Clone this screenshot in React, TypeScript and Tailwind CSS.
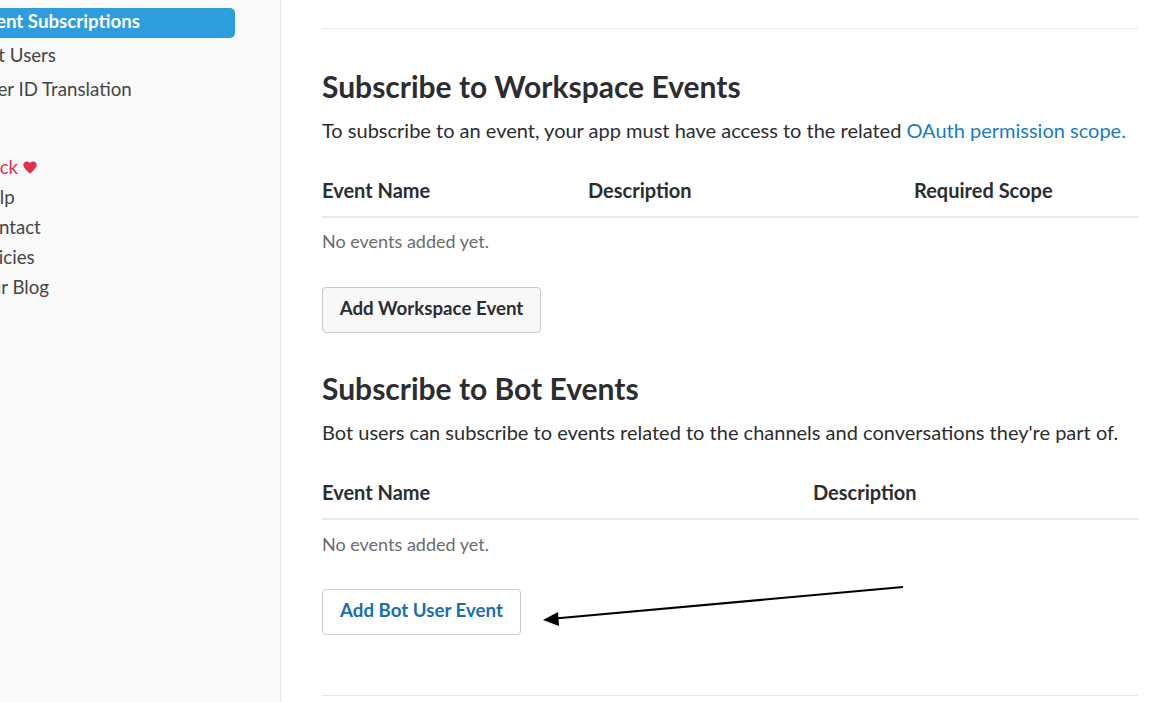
import React from "react";

const font = { fontFamily: "Lato, 'Noto Sans', sans-serif" };

function SideItem({ label, active, red }: { label: React.ReactNode; active?: boolean; red?: boolean }) {
  if (active) {
    return (
      <div className="h-[30px] w-[281px] rounded-[5px] bg-[#2d9de0] pl-[22px] flex items-center text-white font-bold text-[18.7px] leading-[24px]">
        <span className="-mt-[4px]">{label}</span>
      </div>
    );
  }
  return (
    <div className={`h-[30px] pl-[22px] flex items-center text-[18.7px] leading-[24px] ${red ? "text-[#e0304b]" : "text-[#454545]"}`}>
      {label}
    </div>
  );
}

export default function App() {
  return (
    <div className="w-[1160px] h-[702px] overflow-hidden flex bg-white text-[#2c2d30]" style={font}>
      <aside className="w-[281px] shrink-0 bg-[#f9f9f9] border-r border-[#e9e9e9] overflow-hidden">
        <div className="-ml-[46px] pt-[8px] flex flex-col">
          <SideItem label="Event Subscriptions" active />
          <div className="mt-[2px] flex flex-col gap-[4px]">
            <SideItem label="Bot Users" />
            <SideItem label="User ID Translation" />
          </div>
          <div className="mt-[48px] flex flex-col">
            <SideItem
              red
              label={
                <span className="flex items-center gap-[5px]">
                  Slack
                  <svg width="14" height="13" viewBox="0 0 24 22" fill="#e0304b">
                    <path d="M12 21.5 10.3 19.9C4.2 14.4 0.5 11 0.5 6.8 0.5 3.4 3.1 0.8 6.5 0.8c1.9 0 3.8 0.9 5.5 2.4C13.7 1.7 15.6 0.8 17.5 0.8c3.4 0 6 2.6 6 6 0 4.2-3.7 7.6-9.8 13.1L12 21.5z" />
                  </svg>
                </span>
              }
            />
            <SideItem label="Help" />
            <SideItem label="Contact" />
            <SideItem label={<span className="-ml-[3px]">Policies</span>} />
            <SideItem label="Our Blog" />
          </div>
        </div>
      </aside>

      <main className="relative flex-1 pl-[41px] pr-[22px]">
        <div className="h-[29px] border-b border-[#e8e8e8]" />

        <section className="pt-[39px]">
          <h2 className="text-[30px] leading-[36px] font-bold text-[#2c2d30]">Subscribe to Workspace Events</h2>
          <p className="mt-[13px] text-[20px] leading-[27px] text-[#2c2d30]">
            To subscribe to an event, your app must have access to the related{" "}
            <span className="text-[#1a7bbf]">OAuth permission scope.</span>
          </p>
          <div className="mt-[33px] flex border-b-2 border-[#e8e8e8] pb-[12px] text-[20px] leading-[27px] font-bold">
            <div className="w-[266px]">Event Name</div>
            <div className="w-[326px]">Description</div>
            <div>Required Scope</div>
          </div>
          <div className="pt-[11px] text-[18px] leading-[24px] text-[#6b6b6b]">No events added yet.</div>
          <button className="mt-[34px] h-[46px] w-[219px] pb-[3px] rounded-[4px] border border-[#c8c8c8] bg-[#f8f8f8] text-[18.7px] font-bold text-[#2c2d30]">
            Add Workspace Event
          </button>
        </section>

        <section className="pt-[37px]">
          <h2 className="text-[30px] leading-[36px] font-bold text-[#2c2d30]">Subscribe to Bot Events</h2>
          <p className="mt-[13px] text-[20px] leading-[27px] text-[#2c2d30]">
            Bot users can subscribe to events related to the channels and conversations they're part of.
          </p>
          <div className="mt-[33px] flex border-b-2 border-[#e8e8e8] pb-[12px] text-[20px] leading-[27px] font-bold">
            <div className="w-[491px]">Event Name</div>
            <div>Description</div>
          </div>
          <div className="pt-[12px] text-[18px] leading-[24px] text-[#6b6b6b]">No events added yet.</div>
          <button className="mt-[33px] h-[46px] w-[199px] pb-[3px] rounded-[4px] border border-[#c8c8c8] bg-white text-[18.7px] font-bold text-[#1a6fb0]">
            Add Bot User Event
          </button>
        </section>

        <div className="mt-[60px] border-b border-[#e8e8e8]" />

        <svg className="absolute left-[-281px] top-0 pointer-events-none" width="1160" height="702">
          <line x1="903" y1="587" x2="555" y2="618.5" stroke="#000" strokeWidth="2.2" />
          <polygon points="543,620 558,612 559,626" fill="#000" />
        </svg>
      </main>
    </div>
  );
}
